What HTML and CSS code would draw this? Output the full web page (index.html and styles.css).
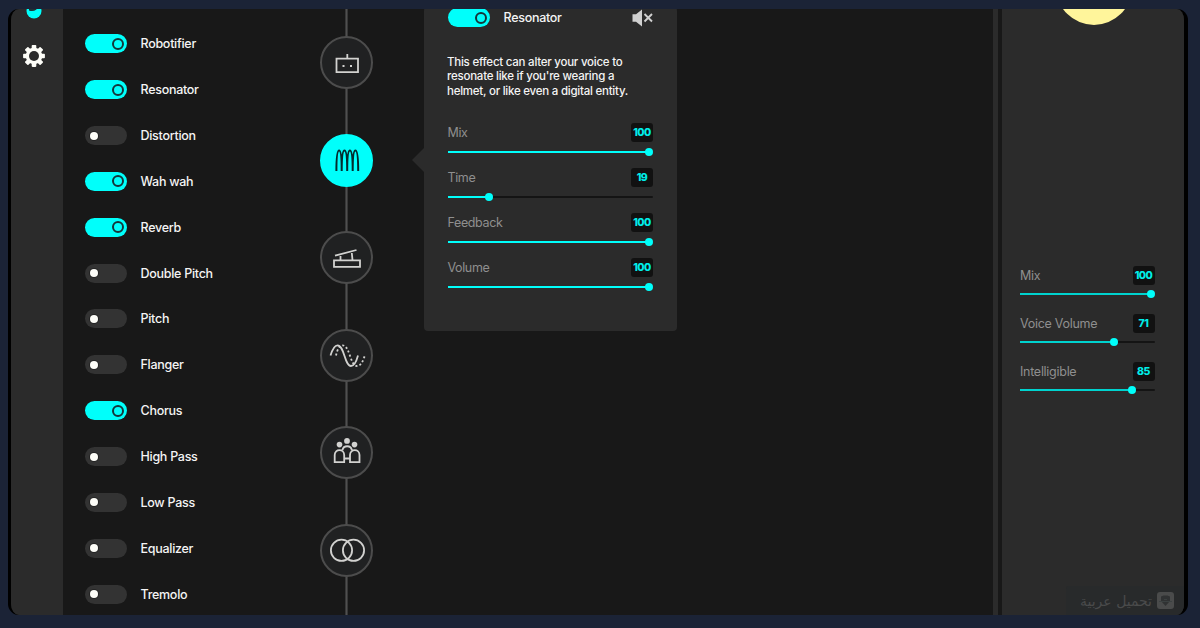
FILE: index.html
```html
<!doctype html>
<html lang="en">

<head>
    <meta charset="UTF-8">
    <title>Voice effects</title>
    <link rel="stylesheet" href="styles.css">
</head>

<body>
    <div class="app">

        <div class="sidebar">
            <svg class="logo" viewBox="0 0 16 16">
                <circle cx="8" cy="8" r="7.5" fill="#00fffb" />
                <path d="M3 4V7.500Q7 9 10.500 6.500V4Z" fill="#1d3436" />
            </svg>
            <svg class="gear" viewBox="-11 -11 22 22">
                <g fill="#fdfdf8">
                    <rect x="-2.300" y="-10.900" width="4.600" height="21.800" rx="0.800" />
                    <rect x="-2.300" y="-10.900" width="4.600" height="21.800" rx="0.800" transform="rotate(45)" />
                    <rect x="-2.300" y="-10.900" width="4.600" height="21.800" rx="0.800" transform="rotate(90)" />
                    <rect x="-2.300" y="-10.900" width="4.600" height="21.800" rx="0.800" transform="rotate(135)" />
                    <circle r="8.300" />
                </g>
                <circle r="5" fill="#2b2b2b" />
            </svg>
        </div>

        <ul class="effects">
            <li><span class="toggle on"></span>Robotifier</li>
            <li><span class="toggle on"></span>Resonator</li>
            <li><span class="toggle"></span>Distortion</li>
            <li><span class="toggle on"></span>Wah wah</li>
            <li><span class="toggle on"></span>Reverb</li>
            <li><span class="toggle"></span>Double Pitch</li>
            <li><span class="toggle"></span>Pitch</li>
            <li><span class="toggle"></span>Flanger</li>
            <li><span class="toggle on"></span>Chorus</li>
            <li><span class="toggle"></span>High Pass</li>
            <li><span class="toggle"></span>Low Pass</li>
            <li><span class="toggle"></span>Equalizer</li>
            <li><span class="toggle"></span>Tremolo</li>
        </ul>

        <div class="chain">
            <!-- robotifier -->
            <div class="node">
                <svg viewBox="-26 -26 52 52">
                    <path d="M-10.500 -4.300H11V9.200H-10.500ZM0.300 -4.300V-9" />
                    <path class="solid" d="M-4.500 2h2v2h-2zM3 2h2v2h-2z" />
                </svg>
            </div>
            <!-- resonator -->
            <div class="node active">
                <svg viewBox="-26 -26 52 52">
                    <path d="M-10.600 11C-10.600 -3 -9.700 -9.500 -7.900 -9.500S-5.300 -3 -5.300 11C-5.300 -3 -4.400 -9.500 -2.500 -9.500S0.200 -3 0.200 11C0.200 -3 1 -9.500 2.900 -9.500S5.700 -3 5.700 11C5.700 -3 6.600 -9.500 8.400 -9.500S11.200 -3 11.200 11" />
                </svg>
            </div>
            <!-- wah wah -->
            <div class="node">
                <svg viewBox="-26 -26 52 52">
                    <path d="M-13 2.300H13V8.800H-13ZM-12 -2.300L9.500 -8M-6.500 -2V2M4.800 -5L5.500 2" />
                </svg>
            </div>
            <!-- reverb -->
            <div class="node">
                <svg viewBox="-26 -26 52 52">
                    <path d="M-16.500 0.500C-14.500 -6 -12.500 -9.700 -9.500 -9.700C-2.500 -9.700 -2.500 11 4 11C7.500 11 9.500 6 11 0.500" />
                    <path class="dots" d="M-11 0.500C-9.500 -6 -7.500 -9.700 -4.500 -9.700C3 -9.700 3 11 10 11C14 11 16 6 18 0" />
                </svg>
            </div>
            <!-- chorus -->
            <div class="node">
                <svg viewBox="-26 -26 52 52">
                    <path d="M-12.300 9.200V2C-12.300 -4.500 -2.800 -4.500 -2.800 2V9.200ZM3 9.200V2C3 -4.500 12.500 -4.500 12.500 2V9.200ZM-4.500 -3C-3.500 -8 4 -8 4.800 -3M-2.800 5.500H3" />
                    <g class="solid">
                        <circle cx="-7.500" cy="-8.400" r="2.800" />
                        <circle cx="0" cy="-12.100" r="2.900" />
                        <circle cx="7.500" cy="-8.400" r="2.800" />
                    </g>
                </svg>
            </div>
            <!-- double pitch -->
            <div class="node">
                <svg viewBox="-26 -26 52 52">
                    <circle cx="-5.500" cy="0.300" r="10.600" />
                    <circle cx="6.500" cy="0.300" r="10.600" />
                </svg>
            </div>
        </div>

        <div class="stage">
            <div class="panel">
                <div class="panel-head">
                    <span class="toggle on"></span>
                    <span class="panel-title">Resonator</span>
                    <svg class="mute" viewBox="0 0 22 18">
                        <path d="M1.500 5.200H5L11 0.500V17.500L5 12.800H1.500Z" fill="#d0d0d0" />
                        <path d="M13.500 5L21 12.500M21 5L13.500 12.500" fill="none" stroke="#d0d0d0" stroke-width="1.900" />
                    </svg>
                </div>
                <p>This effect can alter your voice to<br>resonate like if you're wearing a<br>helmet, or like even a digital entity.</p>
                <div class="sliders">
                    <div class="slider">
                        <div class="slider-head"><span>Mix</span><b>100</b></div>
                        <div class="track"><i style="width: 100%"></i></div>
                    </div>
                    <div class="slider">
                        <div class="slider-head"><span>Time</span><b>19</b></div>
                        <div class="track"><i style="width: 19%"></i></div>
                    </div>
                    <div class="slider">
                        <div class="slider-head"><span>Feedback</span><b>100</b></div>
                        <div class="track"><i style="width: 100%"></i></div>
                    </div>
                    <div class="slider">
                        <div class="slider-head"><span>Volume</span><b>100</b></div>
                        <div class="track"><i style="width: 100%"></i></div>
                    </div>
                </div>
            </div>
        </div>

        <div class="scrollbar"></div>

        <div class="voice">
            <div class="avatar"></div>
            <div class="sliders">
                <div class="slider">
                    <div class="slider-head"><span>Mix</span><b>100</b></div>
                    <div class="track"><i style="width: 100%"></i></div>
                </div>
                <div class="slider">
                    <div class="slider-head"><span>Voice Volume</span><b>71</b></div>
                    <div class="track"><i style="width: 71%"></i></div>
                </div>
                <div class="slider">
                    <div class="slider-head"><span>Intelligible</span><b>85</b></div>
                    <div class="track"><i style="width: 85%"></i></div>
                </div>
            </div>
            <div class="watermark">
                <span lang="ar" dir="rtl">تحميل عربية</span>
                <svg viewBox="0 0 17 17">
                    <rect width="17" height="17" rx="3" fill="#4a4b4b" />
                    <path d="M4 4.500L6.500 3.500H10.500L13 4.500V9L8.500 14L4 9Z" fill="#303233" />
                    <path d="M2 9.500H15M7 7.500H10" stroke="#3b4141" />
                </svg>
            </div>
        </div>

    </div>
</body>

</html>
```
FILE: styles.css
```css
*,
*::before,
*::after {
    margin: 0;
    padding: 0;
    list-style: none;
    box-sizing: border-box;
}

body {
    height: 628px;
    padding: 9px 12px 13px 8px;
    overflow: hidden;
    background: #1b2336;
    color: #f4f4f4;
    font: 500 12.5px/15px Inter, "Liberation Sans", sans-serif;
    letter-spacing: -0.28px;
}

svg {
    display: block;
}

.app {
    display: flex;
    height: 606px;
    border: solid #000;
    border-width: 0 4px 0 3px;
    border-radius: 11px;
    overflow: hidden;
    background: #181818;
}

/* left icon bar */
.sidebar {
    width: 52px;
    flex: none;
    background: #2b2b2b;
}
.logo {
    width: 16px;
    height: 16px;
    margin: -6px 0 0 15px;
}
.gear {
    width: 22px;
    height: 22px;
    margin: 26px 0 0 12px;
}

/* effects list */
.effects {
    width: 257px;
    flex: none;
    padding: 12px 0 0 22px;
}
.effects li {
    display: flex;
    align-items: center;
    gap: 13.5px;
    height: 45.85px;
}

.toggle {
    display: flex;
    align-items: center;
    flex: none;
    width: 42px;
    height: 19px;
    padding: 0 5px;
    border-radius: 10px;
    background: #333;
}
.toggle::before {
    content: "";
    width: 8px;
    height: 8px;
    border-radius: 50%;
    background: #fdfdf8;
    box-shadow: 0 0 0 1px #242424;
}
.toggle.on {
    justify-content: flex-end;
    padding: 0 3px;
    background: #00fffb;
}
.toggle.on::before {
    width: 12px;
    height: 12px;
    border: 2px solid #14363a;
    background: none;
    box-shadow: none;
}

/* effect chain */
.chain {
    display: flex;
    flex-direction: column;
    flex: none;
    gap: 44.6px;
    width: 53px;
    padding-top: 27px;
    background: linear-gradient(90deg, #383838 1px, #505050 1px, #505050 2px, #383838 2px) 25px 0 / 3px 100% no-repeat;
}
.node {
    flex: none;
    width: 53px;
    height: 53px;
    border: 2px solid #4c4c4c;
    border-radius: 50%;
    background: #202122;
}
.node svg {
    width: 52px;
    height: 52px;
    margin: -1.5px;
    fill: none;
    stroke: #d2d2d0;
    stroke-width: 1.8;
}
.node .solid {
    fill: #d2d2d0;
    stroke: none;
}
.node .dots {
    stroke-dasharray: 2 2.2;
}
.node.active {
    border-color: #00fffb;
    background: #00fffb;
}
.node.active svg {
    stroke: #032b2c;
    stroke-width: 2;
}

/* effect settings */
.stage {
    flex: 1;
    padding-left: 51px;
}
.panel {
    position: relative;
    width: 253px;
    height: 323.5px;
    margin-top: -2px;
    padding: 1px 24px 0 23.5px;
    border-radius: 4px;
    background: #2b2b2b;
}
.panel::before {
    content: "";
    position: absolute;
    left: -12px;
    top: 141px;
    border: solid transparent;
    border-width: 12px 12px 12px 0;
    border-right-color: #2b2b2b;
}
.panel-head {
    display: flex;
    align-items: center;
    height: 19px;
}
.panel-title {
    flex: 1;
    padding-left: 14px;
}
.mute {
    width: 22px;
    height: 18px;
}
.panel p {
    margin: 27.5px -10px 24.5px -0.5px;
    font-size: 11.5px;
    line-height: 14.8px;
    letter-spacing: -0.24px;
}

.slider {
    height: 45px;
}
.slider-head {
    display: flex;
    justify-content: space-between;
    align-items: center;
    height: 19px;
    color: #8f8f8f;
    font-weight: 400;
    letter-spacing: -0.38px;
}
.voice .slider-head {
    letter-spacing: -0.28px;
}
.slider-head b {
    width: 22px;
    height: 19px;
    border-radius: 3px;
    background: #111;
    color: #00eee9;
    font-size: 10.5px;
    font-weight: 800;
    line-height: 19px;
    letter-spacing: -0.5px;
    text-align: center;
}
.track {
    height: 2px;
    margin-top: 9px;
    padding-right: 8px;
    border-radius: 1px;
    background: #141414;
}
.track i {
    display: flex;
    align-items: center;
    justify-content: flex-end;
    height: 2px;
    box-sizing: content-box;
    padding-right: 8px;
    background: linear-gradient(#00fffb, #00fffb) 0 0 / calc(100% - 4px) 100% no-repeat;
}
.track i::after {
    content: "";
    flex: none;
    width: 8px;
    height: 8px;
    margin-right: -8px;
    border-radius: 50%;
    background: #00fffb;
}

.scrollbar {
    flex: none;
    width: 9px;
    background: linear-gradient(90deg, #2b2b2b 5px, #181818 5px);
}

/* voice mix */
.voice {
    display: flex;
    flex-direction: column;
    flex: none;
    width: 182px;
    background: #2b2b2b;
}
.avatar {
    flex: none;
    width: 76px;
    height: 76px;
    margin: -60px 0 0 54px;
    border-radius: 50%;
    background: #fff59b;
}
.voice .sliders {
    flex: 1;
    padding: 240.5px 29.5px 0 18px;
}
.voice .slider {
    height: 48px;
}
.voice .track {
    margin-top: 8.5px;
}
.voice .track i {
    background-image: linear-gradient(#00d3cf, #00d3cf);
}
.watermark {
    display: flex;
    align-items: center;
    justify-content: flex-end;
    align-self: flex-end;
    gap: 5px;
    width: 118px;
    height: 29px;
    padding-right: 10px;
    border-radius: 3px 0 0 0;
    background: #282a2b;
    color: #4a4b4b;
    font: 14px/28px "DejaVu Sans", sans-serif;
    letter-spacing: 0;
}
.watermark svg {
    width: 17px;
    height: 17px;
}
```
